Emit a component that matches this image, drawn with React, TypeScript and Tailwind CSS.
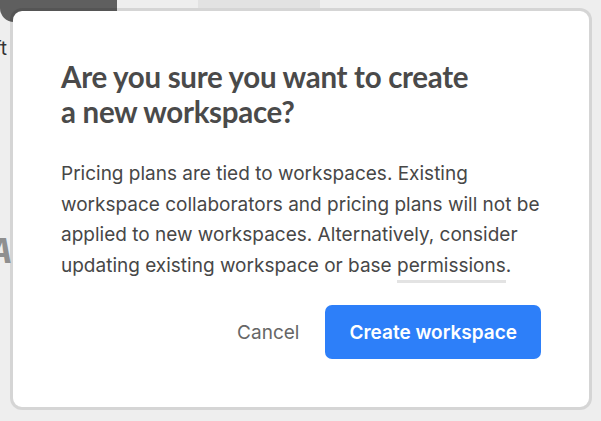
import React from "react";

export default function App() {
  return (
    <div className="relative w-[601px] h-[421px] overflow-hidden bg-[#eeeeee]" style={{ fontFamily: "Inter, 'Liberation Sans', sans-serif" }}>
      {/* page content behind the modal */}
      <div className="absolute left-0 top-[-20px] w-[117px] h-[42px] bg-[#5f5f5f] rounded-bl-[14px]" />
      <div className="absolute left-[198px] top-0 w-[122px] h-[8px] bg-[#e2e2e2]" />
      <div className="absolute left-0 top-[37px] w-[7px] flex justify-end">
        <span className="whitespace-nowrap text-[19px] leading-[24px] text-[#333333]">Draft</span>
      </div>
      <div className="absolute left-0 top-[232px] w-[13px] flex justify-end">
        <span className="whitespace-nowrap text-[34px] leading-[38px] font-bold italic text-[#8f8f8f]">A</span>
      </div>

      {/* modal */}
      <div className="absolute left-[10px] top-[8px] w-[582px] h-[402px] rounded-[12px] border-[3px] border-[rgba(0,0,0,0.1)] bg-white bg-clip-padding p-[48px] flex flex-col">
        <h1 className="whitespace-nowrap text-[29.5px] leading-[35px] font-bold tracking-[-0.3px] text-[#4a4a4a]" style={{ fontFamily: "Lato, 'Noto Sans', sans-serif" }}>
          Are you sure you want to create
          <br />
          a new workspace?
        </h1>
        <p className="mt-[30px] text-[19px] leading-[30.5px] text-[#474747]">
          Pricing plans are tied to workspaces. Existing workspace collaborators and pricing plans will not be applied to new workspaces. Alternatively, consider updating existing workspace or base{" "}
          <span className="border-b-[3px] border-[#e3e3e3] pb-[3px]">permissions</span>.
        </p>
        <div className="mt-auto flex items-center justify-end gap-[26px]">
          <button className="pt-[2px] text-[19px] text-[#666666]">Cancel</button>
          <button className="h-[54px] pt-[2px] px-[24px] rounded-[7px] bg-[#2d7ff9] text-white text-[19px] font-semibold">
            Create workspace
          </button>
        </div>
      </div>
    </div>
  );
}
